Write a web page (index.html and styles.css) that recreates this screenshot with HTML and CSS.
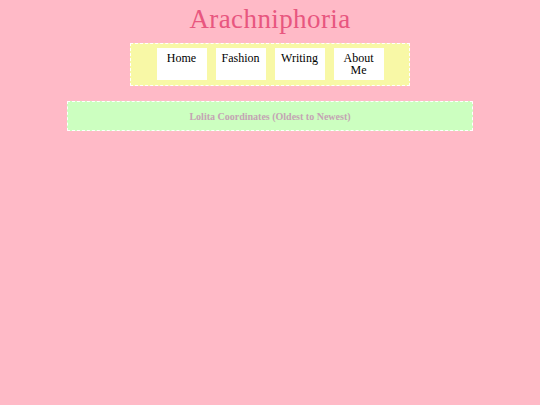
FILE: index.html
```html
<!DOCTYPE html>
<html>
<head>
<meta charset="utf-8">
<link rel="stylesheet" href="styles.css">
</head>
<body>
<h1 class="title">Arachniphoria</h1>
<nav class="nav">
  <a class="nav-btn" href="#">Home</a>
  <a class="nav-btn" href="#">Fashion</a>
  <a class="nav-btn" href="#">Writing</a>
  <a class="nav-btn" href="#">About Me</a>
</nav>
<section class="panel">
  <h2 class="panel-title">Lolita Coordinates (Oldest to Newest)</h2>
</section>
</body>
</html>
```
FILE: styles.css
```css
html, body {
  margin: 0;
  padding: 0;
}
body {
  background: #ffbac7;
  font-family: "Liberation Serif", "Times New Roman", serif;
  display: flex;
  flex-direction: column;
  align-items: center;
  height: 405px;
}
.title {
  margin: 4px 0 0 0;
  font-size: 27px;
  line-height: 31px;
  font-weight: normal;
  color: #e8567f;
  letter-spacing: 0.4px;
}
.nav {
  margin-top: 8px;
  width: 278px;
  height: 37px;
  padding: 4px 0 0 0;
  background: #f8f8a6;
  border: 1px dashed #ffffff;
  display: flex;
  justify-content: center;
  gap: 9px;
}
.nav-btn {
  display: block;
  box-sizing: border-box;
  width: 50px;
  height: 32px;
  background: #ffffff;
  color: #000;
  text-decoration: none;
  text-align: center;
  font-size: 12px;
  line-height: 12px;
  padding: 4px 6px 0;
}
.panel {
  margin-top: 15px;
  width: 404px;
  height: 28px;
  background: #ccffc0;
  border: 1px dashed #ffffff;
  display: flex;
  align-items: center;
  justify-content: center;
}
.panel-title {
  margin: 0;
  font-size: 10px;
  font-weight: bold;
  color: #c4a4b4;
}
```
